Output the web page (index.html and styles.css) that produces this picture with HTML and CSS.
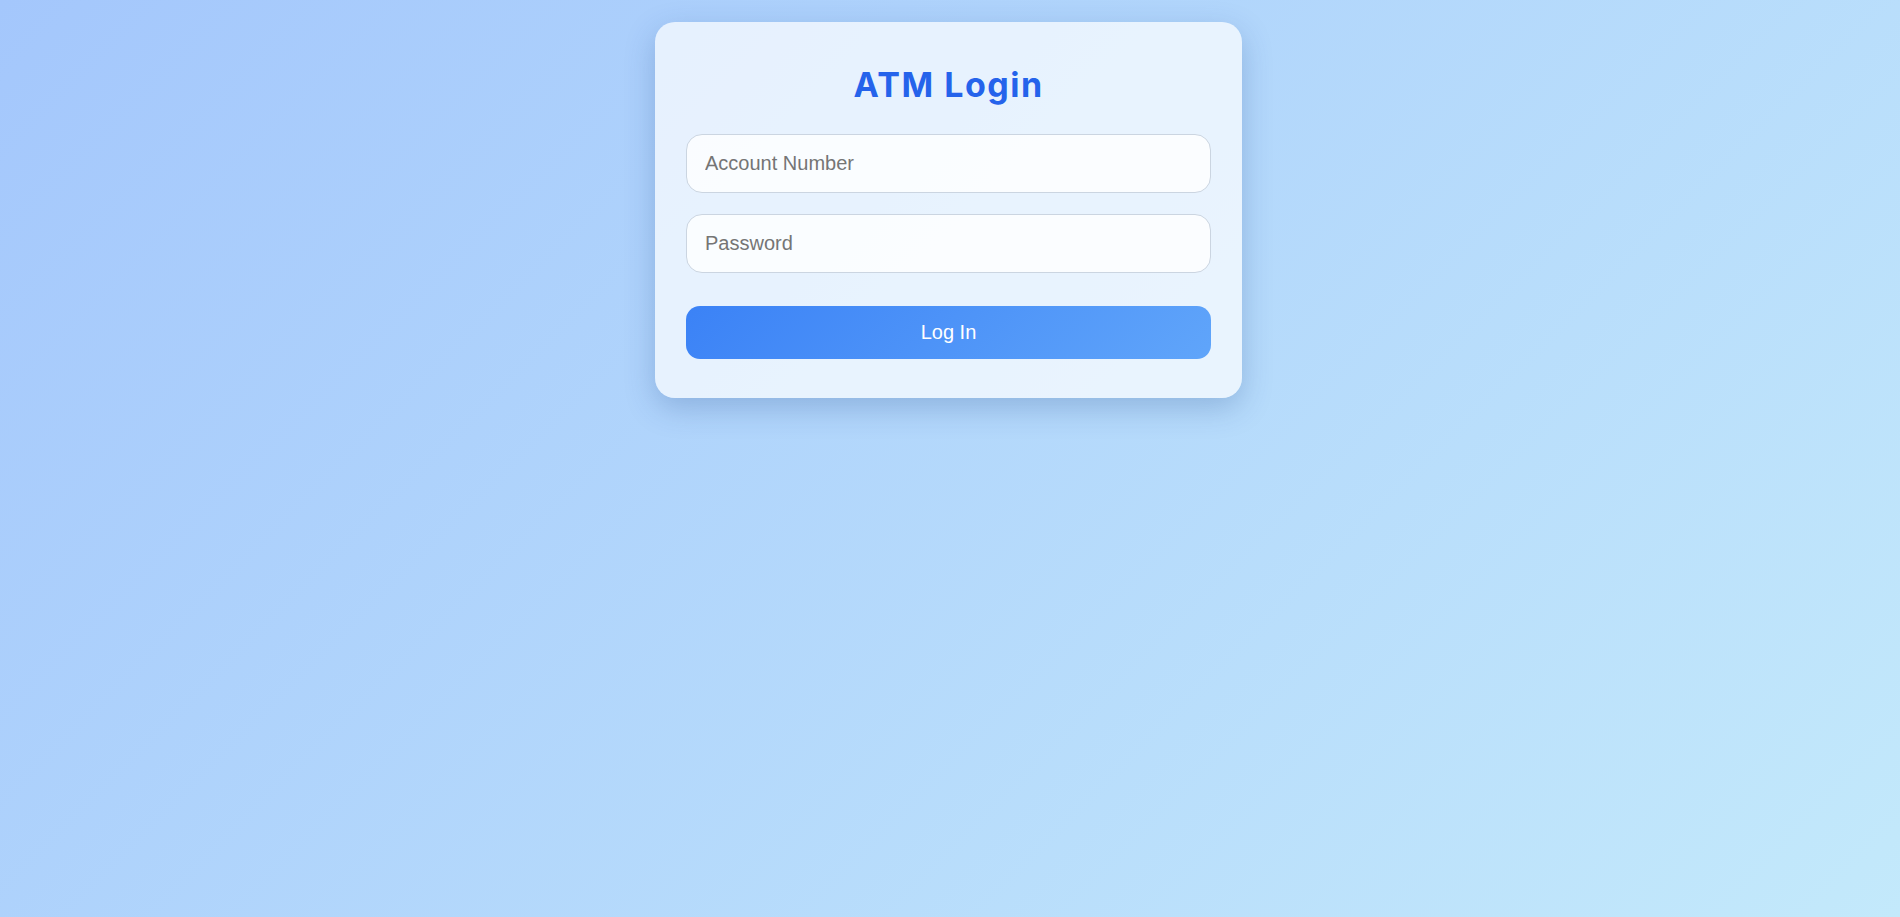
FILE: index.html
```html
<!DOCTYPE html>
<html lang="en">
<head>
<meta charset="utf-8">
<title>ATM Login</title>
<link rel="stylesheet" href="styles.css">
</head>
<body>
<main class="page">
  <form class="card" onsubmit="return false;">
    <h1 class="title">ATM Login</h1>
    <input class="field" type="text" placeholder="Account Number">
    <input class="field field-gap" type="password" placeholder="Password">
    <button class="btn" type="submit">Log In</button>
  </form>
</main>
</body>
</html>
```
FILE: styles.css
```css
html, body {
  margin: 0;
  height: 100%;
}
body {
  background: linear-gradient(135deg, #a4c7fc 0%, #c3e9fb 100%);
  font-family: "Liberation Sans", Arial, sans-serif;
}
.page {
  display: flex;
  justify-content: center;
  padding-top: 22px;
  padding-right: 3px;
}
.card {
  width: 587px;
  box-sizing: border-box;
  padding: 43px 31px 39px;
  background: rgba(255, 255, 255, 0.7);
  border-radius: 20px;
  box-shadow: 0 10px 30px rgba(30, 70, 140, 0.25);
  display: flex;
  flex-direction: column;
}
.title {
  margin: 0 0 29px;
  text-align: center;
  font-family: Inter, "Noto Sans", sans-serif;
  font-weight: 700;
  font-size: 34px;
  line-height: 40px;
  letter-spacing: 1.5px;
  color: #2563eb;
}
.field {
  height: 59px;
  box-sizing: border-box;
  padding: 0 18px;
  border: 1px solid #cbd5e1;
  border-radius: 16px;
  background: rgba(255, 255, 255, 0.8);
  font-family: "Liberation Sans", Arial, sans-serif;
  font-size: 20px;
  color: #1f2937;
  outline: none;
}
.field::placeholder {
  color: #757575;
}
.field-gap {
  margin-top: 21px;
}
.btn {
  margin-top: 33px;
  height: 53px;
  border: none;
  border-radius: 14px;
  background: linear-gradient(135deg, #3b82f6 0%, #60a5fa 100%);
  color: #ffffff;
  font-family: "Liberation Sans", Arial, sans-serif;
  font-size: 20px;
  cursor: pointer;
}
```
